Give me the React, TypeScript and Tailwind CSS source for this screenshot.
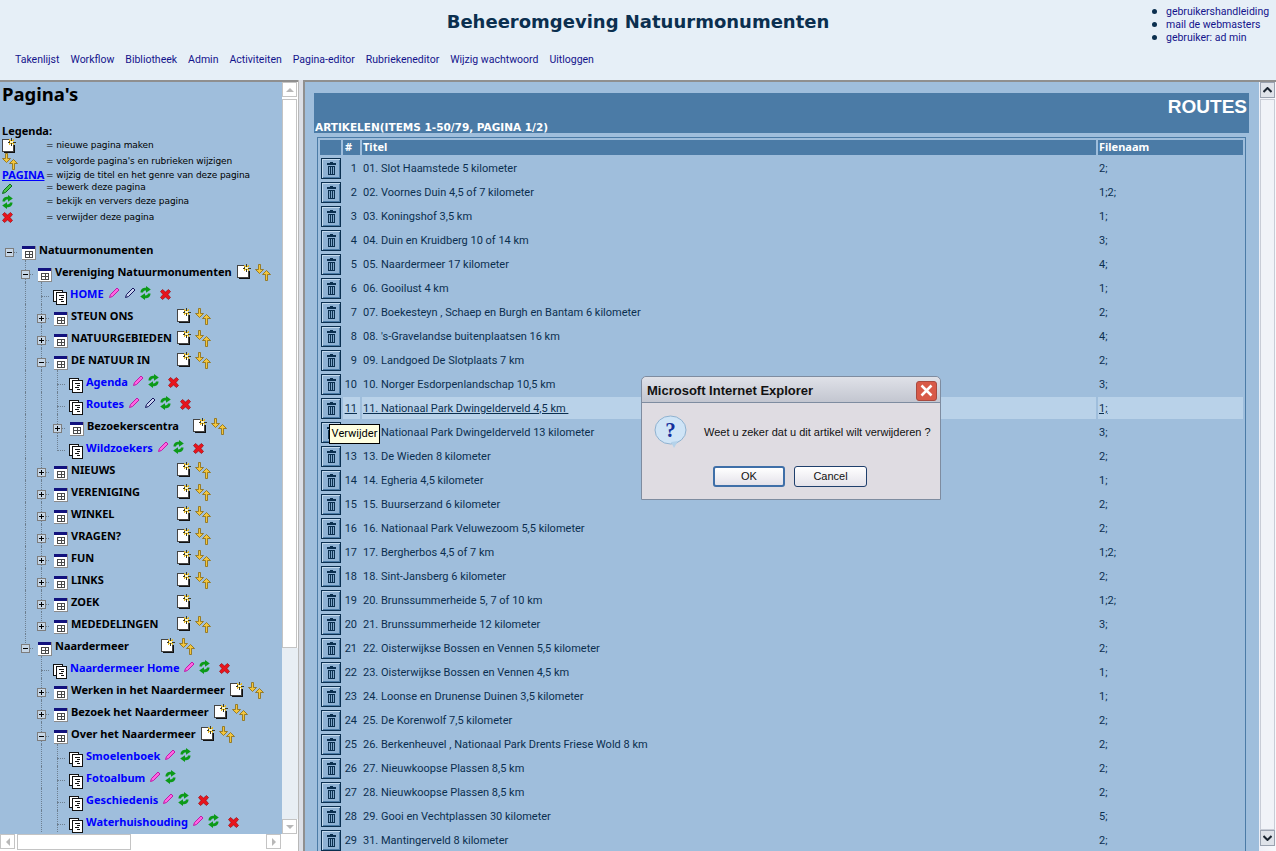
const NAV = ['Takenlijst', 'Workflow', 'Bibliotheek', 'Admin', 'Activiteiten', 'Pagina-editor', 'Rubriekeneditor', 'Wijzig wachtwoord', 'Uitloggen']

const ARTICLES: [string, string, string][] = [
  ['1', '01. Slot Haamstede 5 kilometer', '2;'],
  ['2', '02. Voornes Duin 4,5 of 7 kilometer', '1;2;'],
  ['3', '03. Koningshof 3,5 km', '1;'],
  ['4', '04. Duin en Kruidberg 10 of 14 km', '3;'],
  ['5', '05. Naardermeer 17 kilometer', '4;'],
  ['6', '06. Gooilust 4 km', '1;'],
  ['7', '07. Boekesteyn , Schaep en Burgh en Bantam 6 kilometer', '2;'],
  ['8', "08. 's-Gravelandse buitenplaatsen 16 km", '4;'],
  ['9', '09. Landgoed De Slotplaats 7 km', '2;'],
  ['10', '10. Norger Esdorpenlandschap 10,5 km', '3;'],
  ['11', '11. Nationaal Park Dwingelderveld 4,5 km\u00a0', '1;'],
  ['12', '12. Nationaal Park Dwingelderveld 13 kilometer', '3;'],
  ['13', '13. De Wieden 8 kilometer', '2;'],
  ['14', '14. Egheria 4,5 kilometer', '1;'],
  ['15', '15. Buurserzand 6 kilometer', '2;'],
  ['16', '16. Nationaal Park Veluwezoom 5,5 kilometer', '2;'],
  ['17', '17. Bergherbos 4,5 of 7 km', '1;2;'],
  ['18', '18. Sint-Jansberg 6 kilometer', '2;'],
  ['19', '20. Brunssummerheide 5, 7 of 10 km', '1;2;'],
  ['20', '21. Brunssummerheide 12 kilometer', '3;'],
  ['21', '22. Oisterwijkse Bossen en Vennen 5,5 kilometer', '2;'],
  ['22', '23. Oisterwijkse Bossen en Vennen 4,5 km', '1;'],
  ['23', '24. Loonse en Drunense Duinen 3,5 kilometer', '1;'],
  ['24', '25. De Korenwolf 7,5 kilometer', '2;'],
  ['25', '26. Berkenheuvel , Nationaal Park Drents Friese Wold 8 km', '2;'],
  ['26', '27. Nieuwkoopse Plassen 8,5 km', '2;'],
  ['27', '28. Nieuwkoopse Plassen 8,5 km', '2;'],
  ['28', '29. Gooi en Vechtplassen 30 kilometer', '5;'],
  ['29', '31. Mantingerveld 8 kilometer', '2;'],
]

interface TreeRow {
  label: string
  depth: number
  guides: number[]
  toggle?: '+' | '-'
  last?: boolean
  page?: boolean
  iconsAt?: number // left edge of the icons, measured from the label
  noArrows?: boolean
  dark?: boolean
  noDelete?: boolean
}

const TREE: TreeRow[] = [
  { label: 'Natuurmonumenten', depth: 0, guides: [], toggle: '-', last: true, noArrows: true },
  { label: 'Vereniging Natuurmonumenten', depth: 1, guides: [], toggle: '-' },
  { label: 'HOME', depth: 2, guides: [1], page: true, dark: true },
  { label: 'STEUN ONS', depth: 2, guides: [1], toggle: '+', iconsAt: 101 },
  { label: 'NATUURGEBIEDEN', depth: 2, guides: [1], toggle: '+', iconsAt: 101 },
  { label: 'DE NATUUR IN', depth: 2, guides: [1], toggle: '-', iconsAt: 101 },
  { label: 'Agenda', depth: 3, guides: [1, 2], page: true },
  { label: 'Routes', depth: 3, guides: [1, 2], page: true, dark: true },
  { label: 'Bezoekerscentra', depth: 3, guides: [1, 2], toggle: '+', iconsAt: 101 },
  { label: 'Wildzoekers', depth: 3, guides: [1, 2], page: true, last: true },
  { label: 'NIEUWS', depth: 2, guides: [1], toggle: '+', iconsAt: 101 },
  { label: 'VERENIGING', depth: 2, guides: [1], toggle: '+', iconsAt: 101 },
  { label: 'WINKEL', depth: 2, guides: [1], toggle: '+', iconsAt: 101 },
  { label: 'VRAGEN?', depth: 2, guides: [1], toggle: '+', iconsAt: 101 },
  { label: 'FUN', depth: 2, guides: [1], toggle: '+', iconsAt: 101 },
  { label: 'LINKS', depth: 2, guides: [1], toggle: '+', iconsAt: 101 },
  { label: 'ZOEK', depth: 2, guides: [1], toggle: '+', iconsAt: 101, noArrows: true },
  { label: 'MEDEDELINGEN', depth: 2, guides: [1], toggle: '+', iconsAt: 101, last: true },
  { label: 'Naardermeer', depth: 1, guides: [], toggle: '-', last: true, iconsAt: 101 },
  { label: 'Naardermeer Home', depth: 2, guides: [], page: true },
  { label: 'Werken in het Naardermeer', depth: 2, guides: [], toggle: '+' },
  { label: 'Bezoek het Naardermeer', depth: 2, guides: [], toggle: '+' },
  { label: 'Over het Naardermeer', depth: 2, guides: [], toggle: '-' },
  { label: 'Smoelenboek', depth: 3, guides: [2], page: true, noDelete: true },
  { label: 'Fotoalbum', depth: 3, guides: [2], page: true, noDelete: true },
  { label: 'Geschiedenis', depth: 3, guides: [2], page: true },
  { label: 'Waterhuishouding', depth: 3, guides: [2], page: true },
]

function NewPageIcon() {
  return (
    <svg width="14" height="15" viewBox="0 0 14 15" className="shrink-0" shapeRendering="crispEdges">
      <path d="M0.5 1.5H7V5H11.5V13.5H0.5Z" fill="#fff" stroke="#444" />
      <path d="M2 14.5H12.5V7" fill="none" stroke="#111" />
      <path d="M9.5 0V8M5.5 4H13.5" stroke="#3a3a20" />
      <path d="M7 1.5L12 6.5M12 1.5L7 6.5" stroke="#e8b820" />
      <rect x="8" y="3" width="3" height="2" fill="#fff7c0" />
    </svg>
  )
}

function ArrowsIcon() {
  return (
    <svg width="16" height="17" viewBox="0 0 16 17" className="shrink-0">
      <path d="M3.5 0.5H5.5V5.5H8.5L4.5 9.5L0.5 5.5H3.5Z" fill="#f4c63c" stroke="#8a6a10" strokeWidth="0.8" />
      <path d="M10.5 16.5V10.5H7.5L11.5 6.5L15.5 10.5H12.5V16.5Z" fill="#f4c63c" stroke="#8a6a10" strokeWidth="0.8" />
    </svg>
  )
}

function PencilIcon({ color, edge }: { color: string; edge: string }) {
  return (
    <svg width="11" height="11" viewBox="0 0 11 11" className="shrink-0">
      <path d="M8 1L10 3L3.5 9.5L0.5 10.5L1.5 7.5Z" fill={color} stroke={edge} strokeWidth="1" />
    </svg>
  )
}

function RefreshIcon() {
  return (
    <svg width="11" height="14" viewBox="0 0 11 14" className="shrink-0">
      <path d="M0.5 6.5C0.5 3 3 1.8 6 1.8V0L10.8 3.5L6 6.8V4.6C4 4.6 3.5 5 3 6.5Z" fill="#0c9a18" />
      <path d="M10.5 7.5C10.5 11 8 12.2 5 12.2V14L0.2 10.5L5 7.2V9.4C7 9.4 7.5 9 8 7.5Z" fill="#0c9a18" />
    </svg>
  )
}

function DeleteIcon() {
  return (
    <svg width="11" height="11" viewBox="0 0 11 11" className="shrink-0">
      <path d="M2.5 0.5L5.5 3L8.5 0.5L10.5 2.5L8 5.5L10.5 8.5L8.5 10.5L5.5 8L2.5 10.5L0.5 8.5L3 5.5L0.5 2.5Z" fill="#e8141c" stroke="#9c1016" strokeWidth="0.7" />
    </svg>
  )
}

function FolderIcon() {
  return (
    <svg width="14" height="14" viewBox="0 0 14 14" className="shrink-0" shapeRendering="crispEdges">
      <rect x="0" y="0" width="14" height="14" fill="#8a8a8a" />
      <rect x="0" y="0" width="13" height="13" fill="#fff" />
      <rect x="0" y="0" width="13" height="3" fill="#12127e" />
      <path d="M3.5 5.5H10.5V11.5H3.5ZM3.5 8.5H10.5M7 5.5V11.5" fill="none" stroke="#4a4a4a" />
    </svg>
  )
}

function PagesIcon() {
  return (
    <svg width="14" height="15" viewBox="0 0 14 15" className="shrink-0" shapeRendering="crispEdges">
      <rect x="0.5" y="0.5" width="9" height="11" fill="#fff" stroke="#111" />
      <rect x="3.5" y="2.5" width="10" height="12" fill="#fff" stroke="#111" />
      <path d="M6 5H11M8 7H11M6 9H10M8 11H11" stroke="#111" />
    </svg>
  )
}

function TrashIcon() {
  return (
    <svg width="9" height="13" viewBox="0 0 9 13" shapeRendering="crispEdges">
      <path d="M3 0H6V1H9V3H0V1H3Z" fill="#0b2f4f" />
      <path d="M1 4H8V13H1Z" fill="#0b2f4f" />
      <path d="M2.5 5V12M4.5 5V12M6.5 5V12" stroke="#7ea5c8" />
    </svg>
  )
}

function Connector({ row }: { row: TreeRow }) {
  return (
    <div className="relative h-[22px] w-4 shrink-0">
      {row.depth > 0 && (
        <div className={`ml-2 w-0 border-l border-dotted border-[#6d7f90] ${row.last ? 'h-[15px]' : 'h-[22px]'}`} />
      )}
      <div className="absolute left-2 top-[14px] w-[8px] border-t border-dotted border-[#6d7f90]" />
      {row.toggle && (
        <div className="absolute left-[4px] top-[10px] flex h-[9px] w-[9px] items-center justify-center border border-[#7d7d7d] bg-[#c6d6e6]">
          <div className="h-px w-[5px] bg-black" />
          {row.toggle === '+' && <div className="absolute h-[5px] w-px bg-black" />}
        </div>
      )}
    </div>
  )
}

function TreeItem({ row }: { row: TreeRow }) {
  const cols = Array.from({ length: row.depth }, (_, i) => i)
  return (
    <div className="flex h-[22px] items-start whitespace-nowrap pl-px">
      {cols.map((i) => (
        <div key={i} className="h-[22px] w-4 shrink-0">
          {row.guides.includes(i) && <div className="ml-2 h-[22px] w-0 border-l border-dotted border-[#6d7f90]" />}
        </div>
      ))}
      <Connector row={row} />
      <div className={`flex h-[22px] items-start pt-[8px] ${row.page ? 'ml-[4px]' : 'ml-[5px]'}`}>
        {row.page ? <PagesIcon /> : <FolderIcon />}
      </div>
      <div
        className={`flex h-[22px] items-center font-bold text-[11px] leading-none ${row.page ? 'ml-[3px] text-[#0000ff]' : 'ml-[3px] text-black'}`}
        style={row.iconsAt ? { minWidth: row.iconsAt } : undefined}
      >
        {row.label}
      </div>
      {row.page ? (
        <div className="ml-[5px] flex h-[22px] items-start">
          <div className="pt-[5px]">
            <PencilIcon color="#ff66e0" edge="#c018a8" />
          </div>
          {row.dark && (
            <div className="ml-[5px] pt-[5px]">
              <PencilIcon color="#c8d4ee" edge="#14145c" />
            </div>
          )}
          <div className="ml-[4px] pt-[4px]">
            <RefreshIcon />
          </div>
          {!row.noDelete && (
            <div className="ml-[9px] pt-[7px]">
              <DeleteIcon />
            </div>
          )}
        </div>
      ) : (
        !(row.depth === 0) && (
          <div className="ml-[5px] flex h-[22px] items-start gap-[4px] pt-[4px]">
            <NewPageIcon />
            {!row.noArrows && <ArrowsIcon />}
          </div>
        )
      )}
    </div>
  )
}

function Legend() {
  const rows = [
    { h: 'h-[17px]', icon: <NewPageIcon />, text: '= nieuwe pagina maken' },
    { h: 'h-[15px]', icon: <ArrowsIcon />, text: "= volgorde pagina's en rubrieken wijzigen" },
    { h: 'h-[13px]', icon: <a className="font-bold text-[11px] text-[#0000ff] underline">PAGINA</a>, text: '= wijzig de titel en het genre van deze pagina' },
    { h: 'h-[12px]', icon: <PencilIcon color="#4cc44c" edge="#0c6a18" />, text: '= bewerk deze pagina' },
    { h: 'h-[16px]', icon: <RefreshIcon />, text: '= bekijk en ververs deze pagina' },
    { h: 'h-[15px]', icon: <DeleteIcon />, text: '= verwijder deze pagina' },
  ]
  return (
    <div className="pl-[2px]">
      {rows.map((r) => (
        <div key={r.text} className={`flex items-center ${r.h}`}>
          <div className="flex w-[44px] shrink-0 items-center">{r.icon}</div>
          <span className="whitespace-nowrap font-['DejaVu_Sans'] text-[9px] tracking-[-0.09px] text-black">{r.text}</span>
        </div>
      ))}
    </div>
  )
}

function DisabledBtn({ dir }: { dir: 'up' | 'down' | 'left' | 'right' }) {
  const tri = {
    up: 'border-x-[4px] border-b-[4px] border-x-transparent border-b-[#b8b8b8]',
    down: 'border-x-[4px] border-t-[4px] border-x-transparent border-t-[#b8b8b8]',
    left: 'border-y-[4px] border-r-[4px] border-y-transparent border-r-[#b8b8b8]',
    right: 'border-y-[4px] border-l-[4px] border-y-transparent border-l-[#b8b8b8]',
  }[dir]
  return (
    <div className="flex h-[15px] w-[15px] shrink-0 items-center justify-center border border-[#c4c4c4] bg-white">
      <div className={`h-0 w-0 ${tri}`} />
    </div>
  )
}

function LeftPanel() {
  return (
    <div className="flex w-[298px] shrink-0 flex-col overflow-hidden border-t-2 border-[#8f8f8f] font-['Noto_Sans']">
      <div className="flex min-h-0 flex-1">
        <div className="w-[282px] shrink-0 overflow-hidden">
          <h1 className="pl-[2px] pt-[1px] font-bold text-[18.5px] leading-[22px] text-black">Pagina's</h1>
          <div className="pl-[2px] pt-[19px] font-bold text-[11px] leading-[13px] text-black">Legenda:</div>
          <Legend />
          <div className="pt-[13px]">
            {TREE.map((row) => (
              <TreeItem key={row.label} row={row} />
            ))}
          </div>
        </div>
        <div className="flex w-4 shrink-0 flex-col bg-white">
          <DisabledBtn dir="up" />
          <div className="mt-[2px] h-[549px] w-[15px] border border-[#c4c4c4] bg-white" />
          <div className="flex-1 bg-[#e8eef4]" />
          <DisabledBtn dir="down" />
        </div>
      </div>
      <div className="flex h-[17px] shrink-0 items-start bg-white">
        <DisabledBtn dir="left" />
        <div className="ml-[2px] h-[16px] w-[114px] border border-[#c4c4c4] bg-white" />
        <div className="flex-1" />
        <DisabledBtn dir="right" />
        <div className="w-[17px]" />
      </div>
    </div>
  )
}

function ArticleRow({ row }: { row: [string, string, string] }) {
  const active = row[0] === '11'
  const cell = active ? 'bg-[#b9d2e9] underline' : ''
  return (
    <div className="mb-[2px] flex h-[22px] gap-[2px] whitespace-pre text-[11px] text-[#0b2f4f]">
      <div className="flex w-[21px] shrink-0 items-center pl-px">
        <button className="flex h-[21px] w-[20px] items-center justify-center border border-[#0b2f4f] bg-[#8fb2d4] shadow-[inset_1px_1px_0_#c4daee,inset_-1px_-1px_0_#4b7ba6]">
          <TrashIcon />
        </button>
      </div>
      <div className={`flex w-[17px] shrink-0 items-center justify-end pr-[3px] pt-[2px] ${cell}`}>{row[0]}</div>
      <div className={`flex w-[734px] shrink-0 items-center pl-px pt-[2px] ${cell}`}>{row[1]}</div>
      <div className={`flex flex-1 items-center pl-px pt-[2px] ${cell}`}>{row[2]}</div>
    </div>
  )
}

function ArticleTable() {
  return (
    <div className="mx-[3px] border border-[#4b7ba6] px-[2px] pt-[2px]">
      <div className="mb-[2px] flex h-[15px] gap-[2px] font-['Noto_Sans'] font-bold text-[11px] text-white">
        <div className="w-[21px] shrink-0 bg-[#4b7ba6]" />
        <div className="flex w-[17px] shrink-0 items-center bg-[#4b7ba6] pl-[2px]">#</div>
        <div className="flex w-[734px] shrink-0 items-center bg-[#4b7ba6] pl-px">Titel</div>
        <div className="flex flex-1 items-center bg-[#4b7ba6] pl-px">Filenaam</div>
      </div>
      {ARTICLES.map((row) => (
        <ArticleRow key={row[0]} row={row} />
      ))}
    </div>
  )
}

function MainScrollbar() {
  return (
    <div className="flex w-[17px] shrink-0 flex-col bg-gradient-to-r from-[#eef0f8] to-[#f8f9fc] pl-px">
      <div className="flex h-[16px] w-[15px] items-center justify-center border border-[#9aa2b0] bg-[#dfe3ea]">
        <svg width="9" height="6" viewBox="0 0 9 6">
          <path d="M0.5 5L4.5 1L8.5 5" fill="none" stroke="#1a2430" strokeWidth="2" />
        </svg>
      </div>
      <div className="mt-[1px] h-[740px] w-[15px] border border-[#c8ccd6] bg-[#f1f3f8]" />
      <div className="flex-1" />
      <div className="mb-[5px] flex h-[16px] w-[15px] items-center justify-center border border-[#9aa2b0] bg-[#dfe3ea]">
        <svg width="9" height="6" viewBox="0 0 9 6">
          <path d="M0.5 1L4.5 5L8.5 1" fill="none" stroke="#1a2430" strokeWidth="2" />
        </svg>
      </div>
    </div>
  )
}

function ConfirmDialog() {
  return (
    <div className="absolute left-[641px] top-[376px] flex h-[124px] w-[300px] flex-col rounded-t-[5px] border border-[#7e8ca0] bg-[#dfdce2] font-['Liberation_Sans']">
      <div className="flex h-[26px] shrink-0 items-center justify-between rounded-t-[5px] border-b border-[#7e8ca0] bg-gradient-to-b from-[#dfe1e8] to-[#c3c6d0] pl-[5px] pr-[3px]">
        <span className="pt-[3px] font-bold text-[13px] text-[#111]">Microsoft Internet Explorer</span>
        <div className="mt-[2px] flex h-[20px] w-[21px] items-center justify-center rounded-[3px] border border-[#a84a40] bg-[#d85a48]">
          <svg width="13" height="13" viewBox="0 0 13 13">
            <path d="M1.5 1.5L11.5 11.5M11.5 1.5L1.5 11.5" stroke="#fff" strokeWidth="2.5" />
          </svg>
        </div>
      </div>
      <div className="flex items-center pl-[12px] pt-[12px]">
        <svg width="33" height="34" viewBox="0 0 33 34" className="shrink-0">
          <ellipse cx="16.5" cy="15" rx="15.5" ry="14" fill="#cfe4f6" stroke="#8fb2d0" />
          <path d="M17 27L20 33L24 26Z" fill="#b4d2ea" />
          <text x="16.5" y="22" textAnchor="middle" fontSize="21" fontWeight="700" fontFamily="Liberation Serif" fill="#15309c">?</text>
        </svg>
        <span className="ml-[17px] whitespace-nowrap text-[11px] text-[#111]">Weet u zeker dat u dit artikel wilt verwijderen ?</span>
      </div>
      <div className="flex justify-start gap-[9px] pl-[71px] pt-[17px]">
        <button className="h-[21px] w-[72px] rounded-[3px] border-2 border-[#3f6fa8] bg-gradient-to-b from-[#fff] to-[#e4e2ea] text-[11px] text-[#111]">OK</button>
        <button className="h-[21px] w-[73px] rounded-[3px] border border-[#1f3f6c] bg-gradient-to-b from-[#fff] to-[#e4e2ea] text-[11px] text-[#111]">Cancel</button>
      </div>
    </div>
  )
}

export default function App() {
  return (
    <div className="relative flex h-[851px] w-[1276px] flex-col overflow-hidden bg-[#e6eff7] font-['Roboto']">
      <header className="h-[80px] shrink-0">
        <div className="grid h-[50px] grid-cols-[1fr_auto_1fr]">
          <div />
          <div className="pt-[10px] font-['DejaVu_Sans'] font-bold text-[18px] leading-[24px] text-[#0b2f4f]">Beheeromgeving Natuurmonumenten</div>
          <ul className="w-[124px] justify-self-end pt-[5px] text-[10.5px] leading-[13px] text-[#14148c]">
            <li className="flex items-center whitespace-nowrap"><span className="mr-[9px] h-[5px] w-[5px] shrink-0 rounded-full bg-[#0b2f4f]" />gebruikershandleiding</li>
            <li className="flex items-center whitespace-nowrap"><span className="mr-[9px] h-[5px] w-[5px] shrink-0 rounded-full bg-[#0b2f4f]" />mail de webmasters</li>
            <li className="flex items-center whitespace-nowrap"><span className="mr-[9px] h-[5px] w-[5px] shrink-0 rounded-full bg-[#0b2f4f]" />gebruiker: ad min</li>
          </ul>
        </div>
        <nav className="flex gap-[11px] pl-[15px] pt-[2px] text-[10.5px] leading-[16px] text-[#14148c]">
          {NAV.map((item) => (
            <a key={item} className="whitespace-nowrap">{item}</a>
          ))}
        </nav>
      </header>
      <div className="flex min-h-0 flex-1 bg-[#9fbedc]">
        <LeftPanel />
        <div className="w-[5px] shrink-0 border-l border-[#b8b8b8] bg-[#dcdfe6]" />
        <main className="flex min-w-0 flex-1 border-l-2 border-t-2 border-[#8f8f8f]">
          <div className="min-w-0 flex-1 overflow-hidden pl-[9px] pr-[10px] pt-[11px]">
            <div className="flex h-[40px] flex-col justify-between bg-[#4b7ba6] text-white">
              <div className="pr-[2px] pt-px text-right font-['Liberation_Sans'] font-bold text-[19px] leading-[26px]">ROUTES</div>
              <div className="pl-px font-['DejaVu_Sans'] font-bold text-[10.5px] leading-[12px]">ARTIKELEN(ITEMS 1-50/79, PAGINA 1/2)</div>
            </div>
            <div className="pt-[4px]">
              <ArticleTable />
            </div>
          </div>
          <MainScrollbar />
        </main>
      </div>
      <div className="absolute left-[329px] top-[424px] flex h-[20px] w-[51px] items-center justify-center border border-black bg-[#ffffe1] text-[11px] text-black">Verwijder</div>
      <ConfirmDialog />
    </div>
  )
}
